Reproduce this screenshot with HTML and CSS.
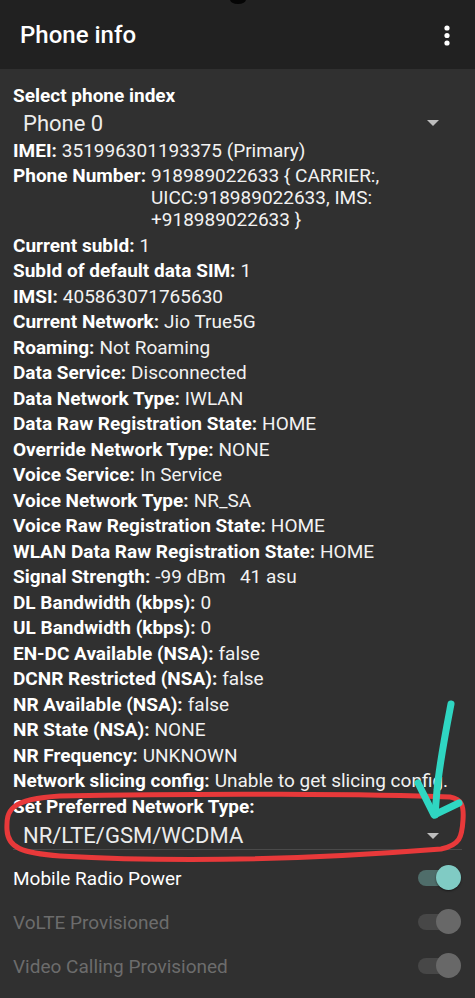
FILE: index.html
```html
<!DOCTYPE html>
<html lang="en">
<head>
  <meta charset="UTF-8" />
  <meta name="viewport" content="width=device-width, initial-scale=1.0"/>
  <title>Phone info</title>
  <link rel="stylesheet" href="styles.css">
</head>
<body>

<div class="page">
  <header class="appbar">
    <span class="camera"></span>
    <h1>Phone info</h1>
    <svg class="menu" width="6" height="22" viewBox="0 0 6 22">
      <circle cx="3" cy="3" r="2.6" fill="#fff"/>
      <circle cx="3" cy="10.5" r="2.6" fill="#fff"/>
      <circle cx="3" cy="18" r="2.6" fill="#fff"/>
    </svg>
  </header>

  <div class="content">
    <div class="row"><span class="label">Select phone index</span></div>
    <div class="spinner">
      <span>Phone 0</span>
      <span class="caret"></span>
    </div>

    <div class="row"><span class="label">IMEI:</span><span class="value">351996301193375 (Primary)</span></div>
    <div class="row"><span class="label">Phone Number:</span><span class="value">918989022633 { CARRIER:, UICC:918989022633, IMS: +918989022633 }</span></div>
    <div class="row"><span class="label">Current subId:</span><span class="value">1</span></div>
    <div class="row"><span class="label">SubId of default data SIM:</span><span class="value">1</span></div>
    <div class="row"><span class="label">IMSI:</span><span class="value">405863071765630</span></div>
    <div class="row"><span class="label">Current Network:</span><span class="value">Jio True5G</span></div>
    <div class="row"><span class="label">Roaming:</span><span class="value">Not Roaming</span></div>
    <div class="row"><span class="label">Data Service:</span><span class="value">Disconnected</span></div>
    <div class="row"><span class="label">Data Network Type:</span><span class="value">IWLAN</span></div>
    <div class="row"><span class="label">Data Raw Registration State:</span><span class="value">HOME</span></div>
    <div class="row"><span class="label">Override Network Type:</span><span class="value">NONE</span></div>
    <div class="row"><span class="label">Voice Service:</span><span class="value">In Service</span></div>
    <div class="row"><span class="label">Voice Network Type:</span><span class="value">NR_SA</span></div>
    <div class="row"><span class="label">Voice Raw Registration State:</span><span class="value">HOME</span></div>
    <div class="row"><span class="label">WLAN Data Raw Registration State:</span><span class="value">HOME</span></div>
    <div class="row"><span class="label">Signal Strength:</span><span class="value">-99 dBm&nbsp;&nbsp;&nbsp;41 asu</span></div>
    <div class="row"><span class="label">DL Bandwidth (kbps):</span><span class="value">0</span></div>
    <div class="row"><span class="label">UL Bandwidth (kbps):</span><span class="value">0</span></div>
    <div class="row"><span class="label">EN-DC Available (NSA):</span><span class="value">false</span></div>
    <div class="row"><span class="label">DCNR Restricted (NSA):</span><span class="value">false</span></div>
    <div class="row"><span class="label">NR Available (NSA):</span><span class="value">false</span></div>
    <div class="row"><span class="label">NR State (NSA):</span><span class="value">NONE</span></div>
    <div class="row"><span class="label">NR Frequency:</span><span class="value">UNKNOWN</span></div>
    <div class="row"><span class="label">Network slicing config:</span><span class="value">Unable to get slicing config.</span></div>
    <div class="row"><span class="label">Set Preferred Network Type:</span></div>
    <div class="spinner spinner-line">
      <span>NR/LTE/GSM/WCDMA</span>
      <span class="caret"></span>
    </div>

    <div class="switches">
      <div class="switch-row">
        <span>Mobile Radio Power</span>
        <span class="switch on"><span class="thumb"></span></span>
      </div>
      <div class="switch-row disabled">
        <span>VoLTE Provisioned</span>
        <span class="switch"><span class="thumb"></span></span>
      </div>
      <div class="switch-row disabled">
        <span>Video Calling Provisioned</span>
        <span class="switch"><span class="thumb"></span></span>
      </div>
    </div>
  </div>

  <!-- hand-drawn marks on top of the screenshot -->
  <svg class="marks" width="475" height="998" viewBox="0 0 475 998">
    <path d="M60 796 C200 793 380 794 450 797 C462 799 464 806 463 820 C462 837 460 845 441 849 C340 857 200 864 60 856 C22 853 8 848 7 830 C6 810 10 799 60 796 Z"
          fill="none" stroke="#e8393a" stroke-width="5" stroke-linejoin="round"/>
    <path d="M451 704 C446 730 440 760 437 790 L435 815" fill="none" stroke="#2fd6c2" stroke-width="7" stroke-linecap="round"/>
    <path d="M418 783 L434 815 L459 803" fill="none" stroke="#2fd6c2" stroke-width="7" stroke-linecap="round" stroke-linejoin="round"/>
  </svg>
</div>

</body>
</html>
```

FILE: styles.css
```css
body {
  margin: 0;
  background: #303030;
  font-family: Roboto, "Noto Sans", Arial, sans-serif;
  color: #fff;
  overflow: hidden;
}

.page {
  position: relative;
  width: 475px;
  height: 998px;
  overflow: hidden;
}

.appbar {
  position: relative;
  height: 69px;
  background: #212121;
  display: flex;
  align-items: center;
  justify-content: space-between;
  padding: 0 25px 0 20px;
}

.appbar h1 {
  margin: 0;
  font-size: 24px;
  font-weight: 500;
  color: #fff;
}

.camera {
  position: absolute;
  left: 230px;
  top: -5px;
  width: 16px;
  height: 9px;
  border-radius: 50%;
  background: #050505;
}

.menu {
  margin-top: 2px;
}

.content {
  padding: 14px 13px 0;
}

.row {
  display: flex;
  font-size: 19px;
  line-height: 22px;
  padding: 2px 0 1.5px;
}

.label {
  flex: none;
  font-weight: 700;
}

.value {
  flex: 1;
  padding-left: 5px;
  color: #f2f2f2;
}

.spinner {
  display: flex;
  align-items: center;
  justify-content: space-between;
  box-sizing: border-box;
  height: 29px;
  padding: 0 23px 0 10px;
  font-size: 22px;
  color: #ececec;
}

.spinner-line {
  height: 31px;
  padding-top: 3px;
  border-bottom: 1px solid #4a4a4a;
}

.caret {
  width: 0;
  height: 0;
  border-left: 6px solid transparent;
  border-right: 6px solid transparent;
  border-top: 6px solid #bdbdbd;
}

.switches {
  margin-top: 6px;
}

.switch-row {
  display: flex;
  align-items: center;
  justify-content: space-between;
  height: 44px;
  font-size: 19px;
  color: #fff;
}

.switch-row.disabled {
  color: #6c6c6c;
}

.switch {
  position: relative;
  width: 40px;
  height: 16px;
  border-radius: 8px;
  background: #474747;
  margin-right: 4px;
}

.switch .thumb {
  position: absolute;
  right: -3px;
  top: -5px;
  width: 25px;
  height: 25px;
  border-radius: 50%;
  background: #686868;
}

.switch.on {
  background: #4f6d6a;
}

.switch.on .thumb {
  background: #80cbc4;
  box-shadow: 0 1px 2px rgba(0,0,0,0.5);
}

.marks {
  position: absolute;
  left: 0;
  top: 0;
  pointer-events: none;
}
```
